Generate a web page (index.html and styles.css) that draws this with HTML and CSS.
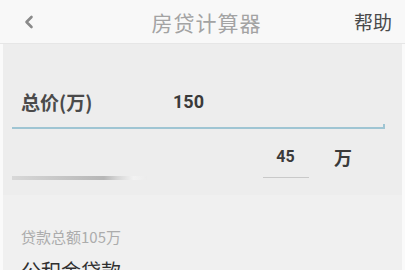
FILE: index.html
```html
<!DOCTYPE html>
<html lang="zh">
<head>
<meta charset="utf-8">
<link rel="stylesheet" href="styles.css">
</head>
<body>
<div class="screen">
  <header class="bar">
    <svg class="back" width="12" height="14" viewBox="0 0 12 14"><path d="M8.5 2 L3.5 7 L8.5 12" fill="none" stroke="#8a8a8a" stroke-width="2.6" stroke-linecap="round" stroke-linejoin="round"/></svg>
    <div class="title">房贷计算器</div>
    <div class="help">帮助</div>
  </header>
  <section class="form">
    <div class="field">
      <span class="label">总价(万)</span>
      <span class="value">150</span>
    </div>
    <div class="underline"></div>
    <div class="ratio">
      <div class="slider"></div>
      <div class="pct">
        <span class="num">45</span>
        <span class="pct-line"></span>
      </div>
      <span class="unit">万</span>
    </div>
  </section>
  <section class="result">
    <div class="total">贷款总额105万</div>
    <div class="kind">公积金贷款</div>
  </section>
</div>
</body>
</html>
```
FILE: styles.css
```css
html, body {
  margin: 0;
  padding: 0;
}
body {
  width: 405px;
  height: 270px;
  overflow: hidden;
  background: #fafafa;
  font-family: "Noto Sans CJK SC", "Noto Sans", sans-serif;
}
.screen {
  display: flex;
  flex-direction: column;
  width: 405px;
}
.bar {
  height: 43px;
  background: #f8f8f8;
  border-bottom: 1px solid #e6e6e6;
  display: flex;
  align-items: center;
  padding: 0 13px 0 23px;
}
.back {
  display: block;
}
.title {
  flex: 1;
  text-align: center;
  font-size: 21px;
  letter-spacing: 1px;
  color: #a3a3a3;
  padding-left: 24px;
}
.help {
  font-size: 19px;
  color: #4a4a4a;
}
.form {
  background: #ededed;
  margin: 0 3px;
  padding-top: 44px;
  height: 151px;
  box-sizing: border-box;
  display: flex;
  flex-direction: column;
}
.field {
  display: flex;
  align-items: center;
  height: 26px;
  padding-left: 18px;
}
.label {
  font-size: 19px;
  font-weight: bold;
  color: #4a4a4a;
  width: 152px;
}
.value {
  font-family: Roboto, "Liberation Sans", sans-serif;
  font-size: 18px;
  font-weight: bold;
  color: #3a3a3a;
}
.underline {
  margin: 13px 17px 0 9px;
  height: 2px;
  background: #9fc5d3;
  position: relative;
}
.underline::after {
  content: "";
  position: absolute;
  right: 0;
  bottom: 0;
  width: 2px;
  height: 5px;
  background: #9fc5d3;
}
.ratio {
  display: flex;
  align-items: flex-start;
  margin-top: 18px;
  padding-left: 9px;
}
.slider {
  width: 135px;
  height: 4px;
  margin-top: 29px;
  background: linear-gradient(90deg, #d8d8d8 0%, #c4c4c4 40%, #b6b6b6 68%, #d6d6d6 78%, #f2f2f2 90%, #ececec 100%);
}
.pct {
  margin-left: 115px;
  width: 47px;
  display: flex;
  flex-direction: column;
  align-items: center;
}
.num {
  font-family: Roboto, "Liberation Sans", sans-serif;
  font-size: 16px;
  font-weight: bold;
  color: #3a3a3a;
  line-height: 20px;
}
.pct-line {
  margin-top: 10px;
  width: 46px;
  height: 1px;
  background: #c9c9c9;
}
.unit {
  margin-left: 25px;
  font-size: 18px;
  font-weight: bold;
  color: #3a3a3a;
  line-height: 20px;
}
.result {
  background: #f0f0f0;
  margin: 0 3px;
  padding: 32px 0 0 18px;
  height: 90px;
}
.total {
  font-size: 15px;
  color: #acacac;
  line-height: 20px;
}
.kind {
  margin-top: 10px;
  font-size: 20px;
  color: #2f2f2f;
  line-height: 28px;
}
```
